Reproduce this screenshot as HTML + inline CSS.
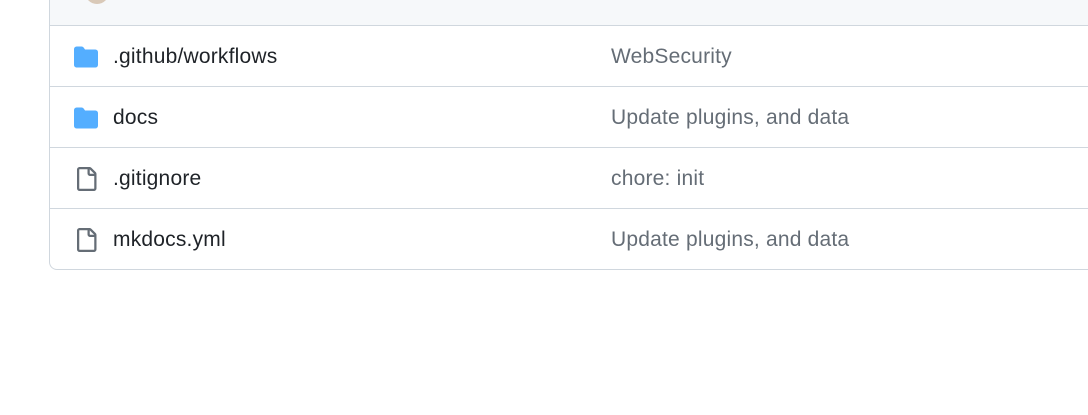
<!DOCTYPE html>
<html><head><style>
body{margin:0;width:1088px;height:415px;background:#fff;font-family:"Liberation Sans",sans-serif;overflow:hidden;position:relative}
.box{position:absolute;left:49px;top:-10px;width:1100px;height:280px;border:1px solid #d0d7de;border-radius:0 0 8px 8px;box-sizing:border-box;border-top:none}
.hdr{position:absolute;left:50px;top:0;width:1040px;height:25px;background:#f6f8fa;border-bottom:1px solid #d0d7de}
.av{position:absolute;left:85px;top:-20px;width:24px;height:24px;border-radius:50%;background:#d9c9b8}
.row{position:absolute;left:50px;width:1040px;height:60px;border-bottom:1px solid #d0d7de}
.ic{position:absolute;left:24px;top:19px}
.nm{position:absolute;left:63px;top:19px;font-size:21px;letter-spacing:0.2px;color:#1f2328}
.msg{position:absolute;left:561px;top:19px;font-size:21px;letter-spacing:0.2px;color:#656d76}
</style></head><body>
<div class="box"></div>
<div class="hdr"></div>
<div class="av"></div>
<div class="row" style="top:26px"><svg class="ic" width="24" height="24" viewBox="0 0 16 16"><path fill="#54aeff" d="M1.75 1A1.75 1.75 0 0 0 0 2.75v10.5C0 14.216.784 15 1.75 15h12.5A1.75 1.75 0 0 0 16 13.25v-8.5A1.75 1.75 0 0 0 14.25 3H7.5a.25.25 0 0 1-.2-.1l-.9-1.2C6.07 1.26 5.55 1 5 1H1.75Z"/></svg><span class="nm">.github/workflows</span><span class="msg">WebSecurity</span></div>
<div class="row" style="top:87px"><svg class="ic" width="24" height="24" viewBox="0 0 16 16"><path fill="#54aeff" d="M1.75 1A1.75 1.75 0 0 0 0 2.75v10.5C0 14.216.784 15 1.75 15h12.5A1.75 1.75 0 0 0 16 13.25v-8.5A1.75 1.75 0 0 0 14.25 3H7.5a.25.25 0 0 1-.2-.1l-.9-1.2C6.07 1.26 5.55 1 5 1H1.75Z"/></svg><span class="nm">docs</span><span class="msg">Update plugins, and data</span></div>
<div class="row" style="top:148px"><svg class="ic" width="24" height="24" viewBox="0 0 16 16"><path fill="#656d76" d="M2 1.75C2 .784 2.784 0 3.75 0h6.586c.464 0 .909.184 1.237.513l2.914 2.914c.329.328.513.773.513 1.237v9.586A1.75 1.75 0 0 1 13.25 16h-9.5A1.75 1.75 0 0 1 2 14.25Zm1.75-.25a.25.25 0 0 0-.25.25v12.5c0 .138.112.25.25.25h9.5a.25.25 0 0 0 .25-.25V6h-2.75A1.75 1.75 0 0 1 9 4.25V1.5Zm6.75.062V4.25c0 .138.112.25.25.25h2.688l-.011-.013-2.914-2.914-.013-.011Z"/></svg><span class="nm">.gitignore</span><span class="msg">chore: init</span></div>
<div class="row" style="top:209px;border-bottom:none"><svg class="ic" width="24" height="24" viewBox="0 0 16 16"><path fill="#656d76" d="M2 1.75C2 .784 2.784 0 3.75 0h6.586c.464 0 .909.184 1.237.513l2.914 2.914c.329.328.513.773.513 1.237v9.586A1.75 1.75 0 0 1 13.25 16h-9.5A1.75 1.75 0 0 1 2 14.25Zm1.75-.25a.25.25 0 0 0-.25.25v12.5c0 .138.112.25.25.25h9.5a.25.25 0 0 0 .25-.25V6h-2.75A1.75 1.75 0 0 1 9 4.25V1.5Zm6.75.062V4.25c0 .138.112.25.25.25h2.688l-.011-.013-2.914-2.914-.013-.011Z"/></svg><span class="nm">mkdocs.yml</span><span class="msg">Update plugins, and data</span></div>
</body></html>
